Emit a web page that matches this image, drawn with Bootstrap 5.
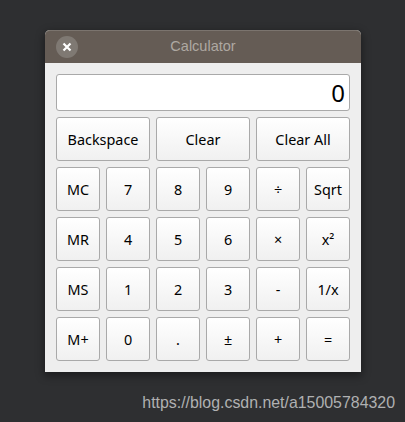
<!DOCTYPE html>
<html lang="en">
<head>
<meta charset="utf-8">
<meta name="viewport" content="width=device-width, initial-scale=1">
<title>Calculator</title>
<link href="https://cdn.jsdelivr.net/npm/bootstrap@5.3.0/dist/css/bootstrap.min.css" rel="stylesheet">
<style>
  body { background: #2e2f31; width: 405px; height: 422px; padding-top: 30px; font-family: "Noto Sans", sans-serif; }
  .calc-window { width: 316px; height: 342px; margin-left: 45px; background: #eeeeee; border-radius: 5px 5px 0 0; box-shadow: 0 3px 9px 1px rgba(0,0,0,.4); }
  .title-bar { height: 33px; background: #655c55; border-top: 1px solid #7b746e; border-radius: 5px 5px 0 0; padding: 0 11px; }
  .close-btn { width: 22px; height: 22px; background: #7f7973; }
  .title-text { font: 14.5px/20px "Liberation Sans", Arial, sans-serif; color: #aea8a2; padding-bottom: 3px; }
  .key-grid { grid-template-columns: repeat(6, 44px); grid-template-rows: 37px repeat(5, 44px); gap: 6px; padding: 11px; }
  .display { grid-column: span 6; min-width: 0; background: #fff; border: 1px solid #a9a9a9; border-radius: 3px; padding: 0 4px 0 0; font-size: 24px; line-height: 35px; color: #000; text-align: right; outline: 0; }
  .key { --bs-btn-font-size: 14.4px; --bs-btn-line-height: 20px; --bs-btn-color: #000; --bs-btn-border-color: #a9a9a9; --bs-btn-border-radius: 3px; --bs-btn-padding-x: 0; --bs-btn-padding-y: 0; background: linear-gradient(#fff, #f0f0f0); padding-top: 1px; white-space: nowrap; }
  .key-wide { grid-column: span 2; }
  .source-link { font: 15.9px/20px "Liberation Sans", Arial, sans-serif; color: #b0b1b2; margin: 21px 10px 0 0; }
</style>
<script src="https://cdn.jsdelivr.net/npm/bootstrap@5.3.0/dist/js/bootstrap.bundle.min.js"></script>
</head>
<body class="overflow-hidden">
  <main class="calc-window">
    <header class="title-bar d-flex align-items-center justify-content-between">
      <button class="close-btn btn rounded-circle border-0 p-0 d-flex align-items-center justify-content-center" aria-label="Close">
        <svg width="10" height="10" viewBox="0 0 10 10" fill="none" stroke="#fff" stroke-width="2.2"><path d="M1.5 1.5 8.5 8.5M8.5 1.5 1.5 8.5"/></svg>
      </button>
      <span class="title-text">Calculator</span>
      <span class="close-btn invisible"></span>
    </header>
    <div class="key-grid d-grid">
      <input class="display" value="0" readonly aria-label="Display">
      <button class="btn key key-wide">Backspace</button>
      <button class="btn key key-wide">Clear</button>
      <button class="btn key key-wide">Clear All</button>
      <button class="btn key">MC</button>
      <button class="btn key">7</button>
      <button class="btn key">8</button>
      <button class="btn key">9</button>
      <button class="btn key">÷</button>
      <button class="btn key">Sqrt</button>
      <button class="btn key">MR</button>
      <button class="btn key">4</button>
      <button class="btn key">5</button>
      <button class="btn key">6</button>
      <button class="btn key">×</button>
      <button class="btn key">x²</button>
      <button class="btn key">MS</button>
      <button class="btn key">1</button>
      <button class="btn key">2</button>
      <button class="btn key">3</button>
      <button class="btn key">-</button>
      <button class="btn key">1/x</button>
      <button class="btn key">M+</button>
      <button class="btn key">0</button>
      <button class="btn key">.</button>
      <button class="btn key">±</button>
      <button class="btn key">+</button>
      <button class="btn key">=</button>
    </div>
  </main>
  <div class="source-link text-end">https://blog.csdn.net/a15005784320</div>
</body>
</html>
